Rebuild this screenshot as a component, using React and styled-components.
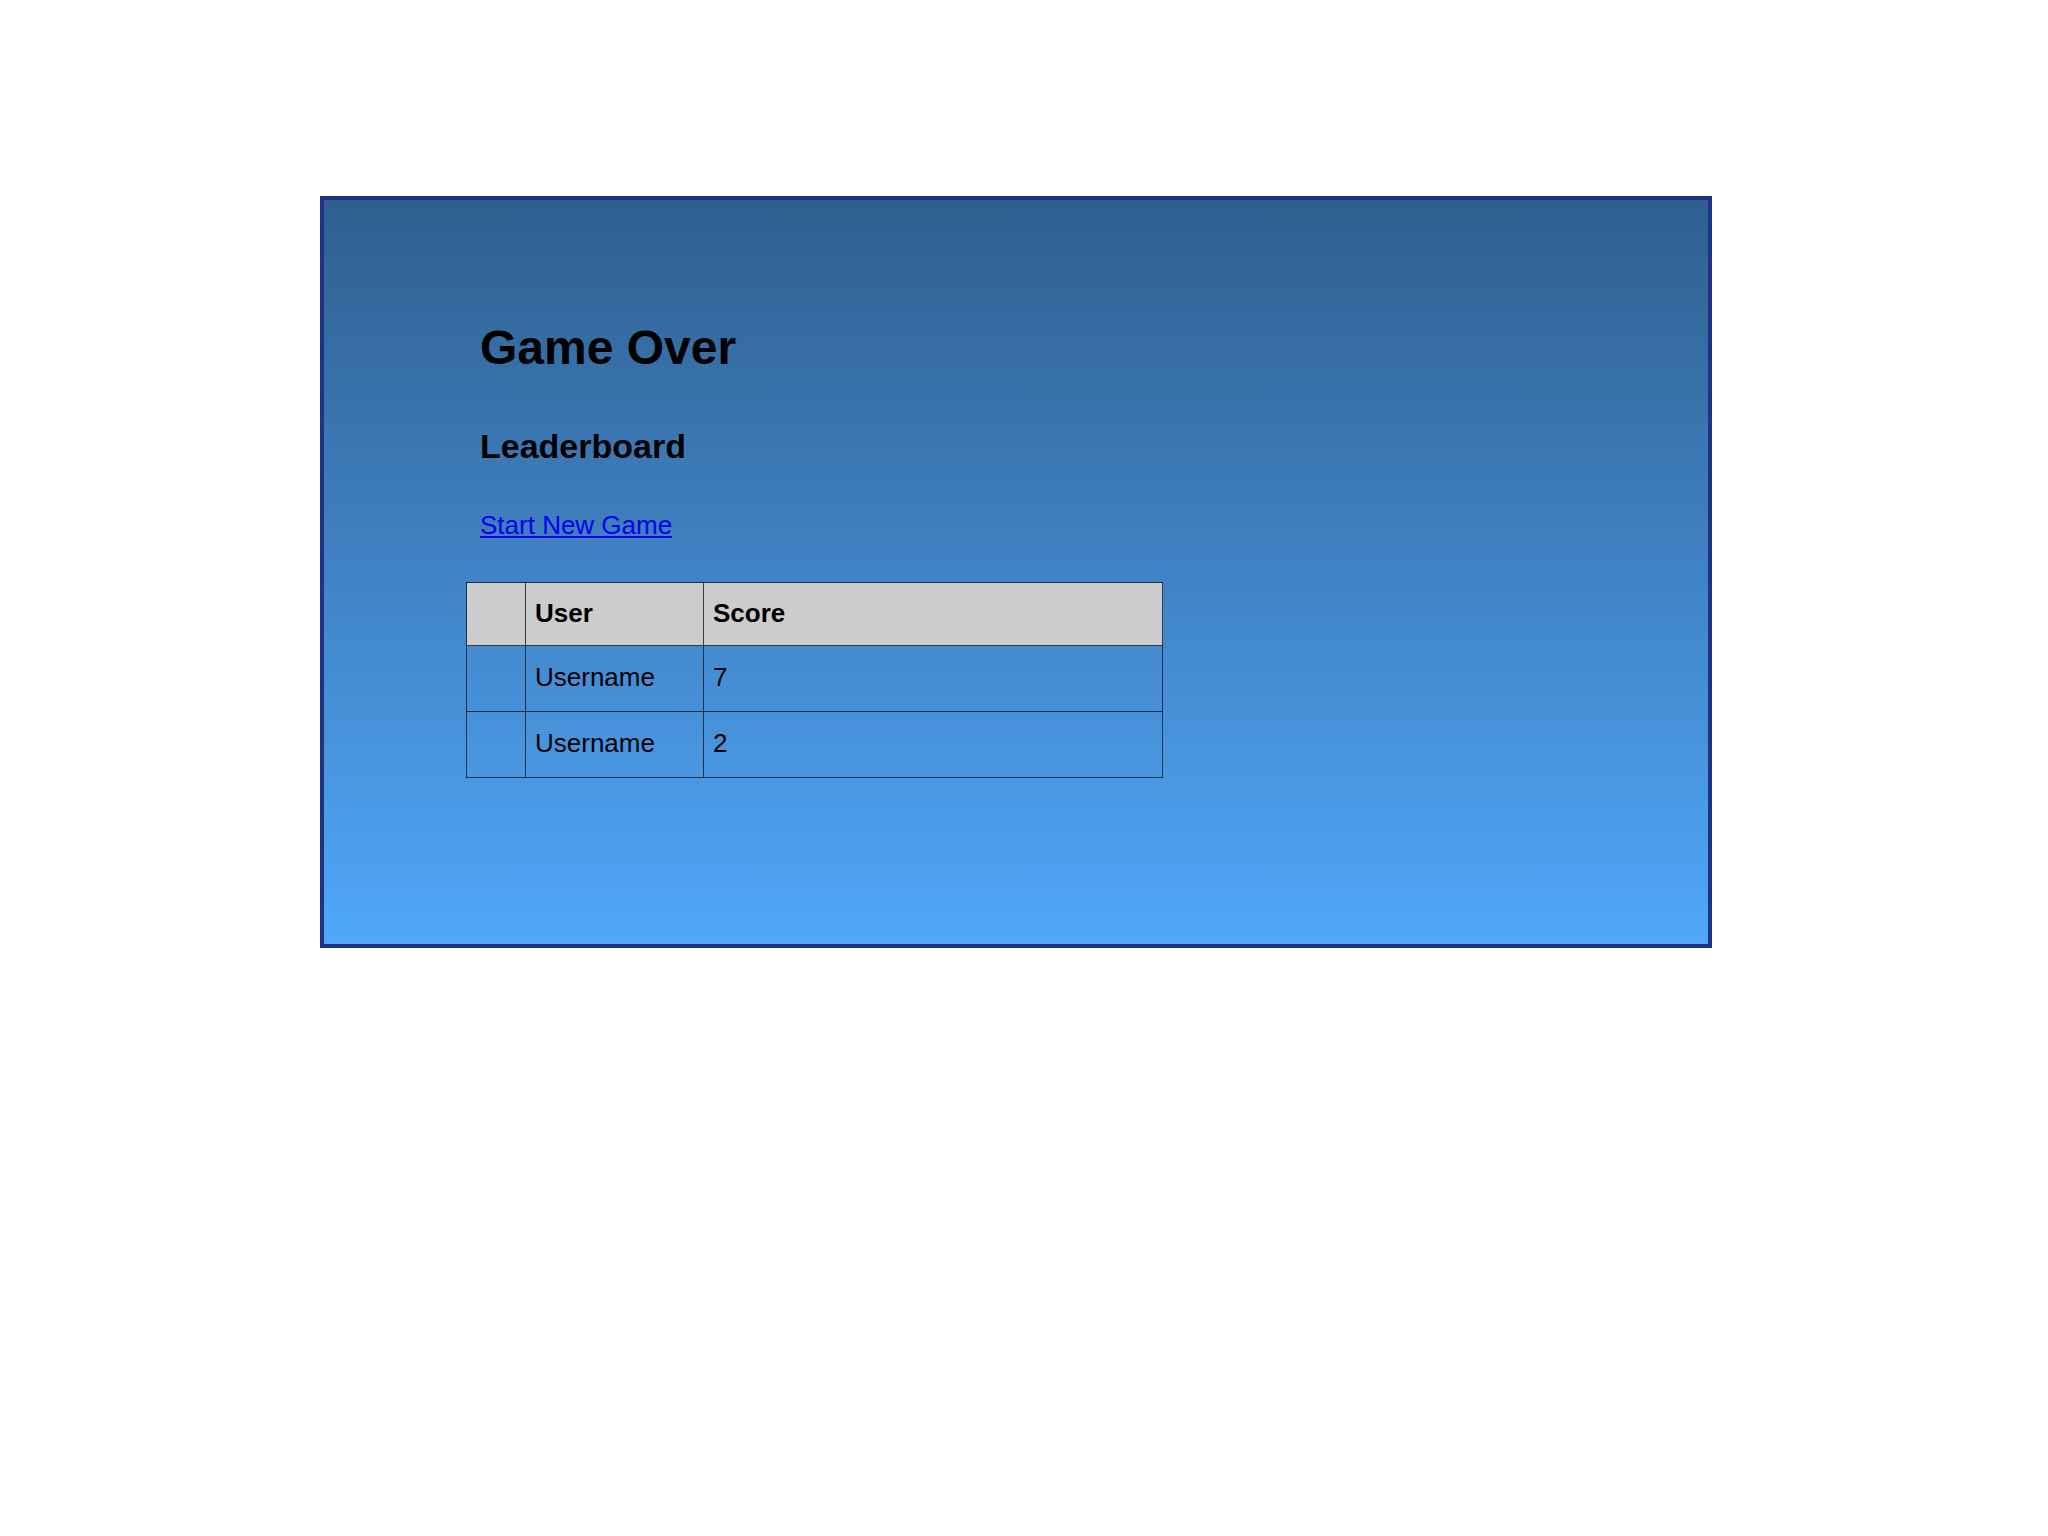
import React from 'react';
import styled, { createGlobalStyle } from 'styled-components';

const GlobalStyle = createGlobalStyle`
  body {
    margin: 0;
    background: #ffffff;
    font-family: "Liberation Sans", Arial, sans-serif;
  }
`;

const GameBoard = styled.div`
  box-sizing: border-box;
  width: 1392px;
  height: 752px;
  margin: 196px 0 0 320px;
  border: 4px solid #1e3384;
  background: linear-gradient(#2f5f8f, #51a7fa);
  padding: 120px 0 0 142px;
`;

const Title = styled.h1`
  margin: 0;
  padding-left: 14px;
  font-size: 48px;
  font-weight: 700;
  line-height: 55px;
  color: #000;
`;

const SubTitle = styled.h2`
  margin: 52px 0 0;
  padding-left: 14px;
  font-size: 34px;
  font-weight: 700;
  line-height: 39px;
  color: #000;
`;

const LinkRow = styled.div`
  margin-top: 44px;
  padding-left: 14px;
  font-size: 26px;
  line-height: 30px;

  a {
    color: #0000ee;
  }
`;

const Leaderboard = styled.table`
  margin-top: 42px;
  border-collapse: collapse;
  width: 697px;
  font-size: 26px;

  th, td {
    border: 1px solid rgba(10, 25, 50, 0.8);
    padding: 0 0 2px 9px;
    text-align: left;
    vertical-align: middle;
  }

  td {
    height: 63px;
    font-weight: 400;
  }
`;

const HeadCell = styled.th`
  width: ${(props) => (props.$width ? `${props.$width}px` : 'auto')};
  height: 60px;
  background: #cccccc;
  font-weight: 700;
`;

const scores = [
  { user: 'Username', score: 7 },
  { user: 'Username', score: 2 },
];

const App = () => {
  return (
    <>
      <GlobalStyle />
      <GameBoard>
        <Title>Game Over</Title>
        <SubTitle>Leaderboard</SubTitle>
        <LinkRow>
          <a href="#new">Start New Game</a>
        </LinkRow>
        <Leaderboard>
          <thead>
            <tr>
              <HeadCell $width={49}></HeadCell>
              <HeadCell $width={168}>User</HeadCell>
              <HeadCell>Score</HeadCell>
            </tr>
          </thead>
          <tbody>
            {scores.map((row, i) => (
              <tr key={i}>
                <td></td>
                <td>{row.user}</td>
                <td>{row.score}</td>
              </tr>
            ))}
          </tbody>
        </Leaderboard>
      </GameBoard>
    </>
  );
};

export default App;
